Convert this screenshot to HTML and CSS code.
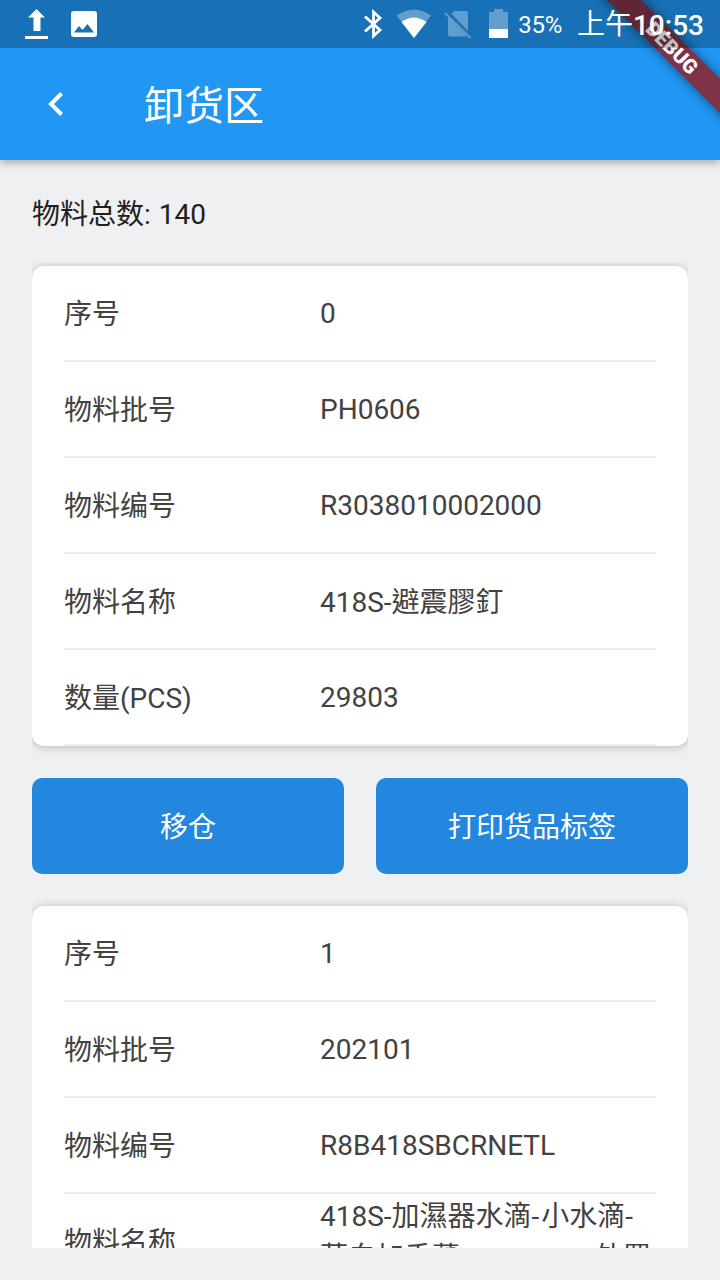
FILE: index.html
```html
<!DOCTYPE html>
<html lang="zh-CN">
<head>
<meta charset="utf-8">
<title>卸货区</title>
<link rel="stylesheet" href="styles.css">
</head>
<body>
<div class="screen">
  <header class="top">
    <div class="status">
      <div class="status-left">
        <svg width="24" height="32" viewBox="0 0 24 32" fill="#fff"><path d="M12.500 1 21 9.500h-4.500v13.500h-7V9.500H4zM1 28h23v3H1z"/></svg>
        <svg width="26" height="26" viewBox="0 0 26 26"><rect width="26" height="26" rx="3" fill="#fff"/><path d="M3 21.500 8 15l3.500 4L16.500 13l6.500 8.500z" fill="#1a70b7"/></svg>
      </div>
      <div class="status-right">
        <svg class="bt" width="20" height="30" viewBox="0 0 20 30" fill="none" stroke="#fff" stroke-width="2.800"><path d="m2 7.500 15 13.500-6.500 6V3L17 9 2 22.500"/></svg>
        <svg class="wifi" width="36" height="30" viewBox="0 0 36 30"><path d="M.5 6.500Q18-5.500 35 6.500L18 29z" fill="#fff" opacity=".32"/><path d="M5.500 13Q18 4 30.500 13L18 29z" fill="#fff"/></svg>
        <svg class="sim" width="28" height="30" viewBox="0 0 28 30" fill="#fff" opacity=".32"><path d="M10 2h12q2 0 2 2v18L7.500 5zM4 8l19 19.500H6q-2 0-2-2z"/><path d="m1 4 25.500 25" stroke="#fff" stroke-width="2"/></svg>
        <svg class="battery" width="19" height="29" viewBox="0 0 19 29" fill="#fff"><path d="M0 3h5V0h9v3h5v17H0z" opacity=".32"/><path d="M0 20h19v9H0z"/></svg>
        <span class="percent">35%</span>
        <span class="clock"><span class="ampm">上午</span>10:53</span>
      </div>
    </div>
    <div class="bar">
      <svg class="back" width="16" height="26" viewBox="0 0 16 26" fill="none" stroke="#fff" stroke-width="4"><path d="M13.500 2.500 3 13l10.500 10.500"/></svg>
      <h1 class="title">卸货区</h1>
    </div>
    <div class="ribbon"><span>DEBUG</span></div>
  </header>
  <p class="total">物料总数<span class="colon">:</span> 140</p>
  <main class="list">
    <section class="card">
      <div class="row"><span class="label">序号</span><span class="value">0</span></div>
      <div class="row"><span class="label">物料批号</span><span class="value">PH0606</span></div>
      <div class="row"><span class="label">物料编号</span><span class="value">R3038010002000</span></div>
      <div class="row"><span class="label">物料名称</span><span class="value mixed" lang="zh-TW">418S-避震膠釘</span></div>
      <div class="row"><span class="label">数量(PCS)</span><span class="value">29803</span></div>
    </section>
    <div class="actions">
      <button class="btn">移仓</button>
      <button class="btn">打印货品标签</button>
    </div>
    <section class="card">
      <div class="row"><span class="label">序号</span><span class="value">1</span></div>
      <div class="row"><span class="label">物料批号</span><span class="value">202101</span></div>
      <div class="row"><span class="label">物料编号</span><span class="value">R8B418SBCRNETL</span></div>
      <div class="row"><span class="label">物料名称</span><span class="value long">418S-加濕器水滴<span class="dash">-</span>小水滴<span class="dash">-</span><br>藍白加香薰<span class="gap"></span>外罩</span></div>
    </section>
  </main>
</div>
</body>
</html>
```
FILE: styles.css
```css
* { box-sizing: border-box; }
body { margin: 0; font-family: Roboto, "Noto Sans CJK SC", sans-serif; font-size: 28px; color: #424242; }
svg { display: block; }
.screen { width: 720px; height: 1280px; background: #eff0f2; overflow: hidden; display: flex; flex-direction: column; padding-bottom: 32px; }
.top { position: relative; flex: none; height: 160px; background: #2196f3; box-shadow: 0 3px 8px rgba(0,0,0,.3); z-index: 1; }
.status { height: 48px; display: flex; justify-content: space-between; background: rgba(0,0,0,.25); color: #fff; padding: 0 16px 0 24px; position: relative; z-index: 2; }
.status-left, .status-right { display: flex; align-items: center; }
.status-left { gap: 23px; }
.status-left svg:first-child { margin-top: -1px; }
.bt { margin-right: 13px; }
.wifi { margin-right: 12px; }
.sim { margin-right: 17px; }
.battery { margin-right: 10px; margin-top: -1px; }
.percent { font-size: 24px; margin-right: 15px; padding-top: 2px; letter-spacing: -.3px; }
.clock { font-size: 28px; font-weight: 500; white-space: nowrap; height: 40px; line-height: 44px; }
.ampm { font-weight: 400; position: relative; top: -1px; }
.bar { height: 112px; display: flex; align-items: center; padding-left: 48px; gap: 80px; color: #fff; }
.title { margin: 0; padding-top: 5px; font-size: 40px; font-weight: 400; line-height: 48px; }
.ribbon { position: absolute; top: 0; right: 0; width: 180px; height: 160px; overflow: hidden; z-index: 1; }
.ribbon span { position: absolute; left: 32px; top: 36px; width: 200px; height: 24px; line-height: 24px; text-align: center; transform: rotate(45deg); background: #7f3349; color: #fff; font-size: 20px; font-weight: 900; box-shadow: 0 0 12px rgba(0,0,0,.5); }
.total { margin: 0; padding: 0 32px; height: 102px; line-height: 110px; color: #212121; flex: none; }
.colon { margin-right: 1px; }
.list { flex: 1; min-height: 0; margin: 0 32px; padding-top: 4px; overflow: hidden; }
.card { background: #fff; border-radius: 12px; padding: 0 32px; box-shadow: 0 1px 10px rgba(0,0,0,.24); }
.row { height: 96px; border-bottom: 2px solid #eee; display: flex; align-items: center; }
.label { width: 256px; flex: none; padding-bottom: 2px; }
.value { flex: 1; }
.mixed { padding-bottom: 2px; }
.long { line-height: 41px; white-space: nowrap; margin-top: -9px; }
.dash { letter-spacing: 2px; }
.gap { display: inline-block; width: 135px; }
.actions { display: flex; gap: 32px; padding: 32px 0; }
.btn { flex: 1; height: 96px; border: 0; border-radius: 10px; padding: 0 0 2px; background: #2487df; color: #fff; font: inherit; }
```
